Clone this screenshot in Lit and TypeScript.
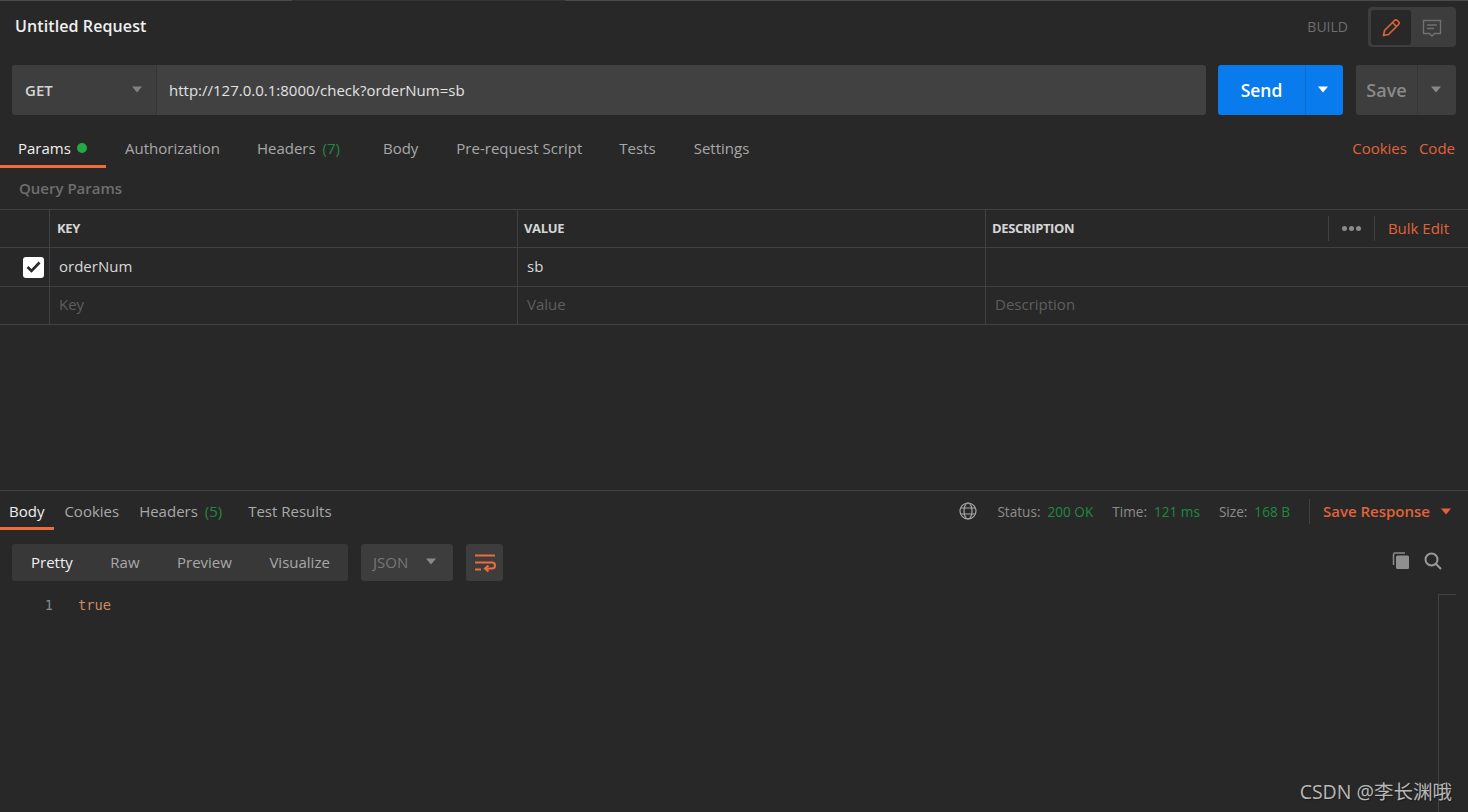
import { LitElement, html, css } from "lit";
import { customElement } from "lit/decorators.js";

const caret = (cls: string) => html`<svg class="${cls}" width="12" height="7" viewBox="0 0 12 7"><path d="M1 0.5h10L6 6.5z" fill="currentColor"/></svg>`;

@customElement("app-root")
export class AppRoot extends LitElement {
  static styles = css`
    :host { display: block; width: 1468px; height: 812px; background: #282828; font-family: "Open Sans", sans-serif; color: #b5b5b5; font-size: 15px; overflow: hidden; position: relative; }
    * { box-sizing: border-box; }
    .page { display: flex; flex-direction: column; height: 812px; }
    .topline { height: 1px; display: grid; grid-template-columns: 292px 273px 1fr; flex: none; }
    .topline i:nth-child(1), .topline i:nth-child(3) { background: #4a4a4a; }
    .topline i:nth-child(2) { background: #333; }
    .head { height: 64px; flex: none; display: flex; align-items: flex-start; padding: 5px 12px 0 15px; }
    .title { font-weight: 600; font-size: 16px; letter-spacing: 0.1px; color: #f0f0f0; margin-top: 9px; line-height: 22px; }
    .build { margin-left: auto; margin-top: 12px; font-size: 14px; font-weight: 400; color: #6f6f6f; line-height: 18px; }
    .switch { margin-left: 20px; width: 88px; height: 40px; background: #3d3d3d; border-radius: 4px; padding: 3px; display: flex; margin-top: 1px; }
    .switch > div { width: 40px; height: 35px; border-radius: 3px; display: flex; align-items: center; justify-content: center; }
    .switch .on { background: #282828; }
    .switch .off { width: 42px; }
    .urlrow { height: 50px; flex: none; padding: 0 12px; display: flex; }
    .method { width: 145px; background: #3e3e3e; border-radius: 3px 0 0 3px; display: flex; align-items: center; justify-content: space-between; padding: 0 13px; font-weight: 600; font-size: 15px; color: #d4d4d4; border-right: 1px solid #353535; padding-bottom: 1px; }
    .method svg { color: #808080; }
    .url { width: 1049px; background: #414141; border-radius: 0 3px 3px 0; display: flex; align-items: center; padding-left: 12px; padding-bottom: 1px; color: #e2e2e2; font-size: 15px; }
    .send { width: 125px; margin-left: 12px; background: #097bed; color: #fff; border-radius: 3px; display: flex; font-weight: 600; font-size: 17.5px; }
    .send span, .save span { display: flex; align-items: center; justify-content: center; padding-bottom: 1px; }
    .send .l { width: 87px; }
    .send .r { width: 34px; border-left: 1px solid #0a6cd0; }
    .save { width: 100px; margin-left: 13px; background: #3e3e3e; color: #8a8a8a; border-radius: 3px; display: flex; font-weight: 600; font-size: 18px; }
    .save .l { width: 61px; }
    .save .r { width: 37px; border-left: 1px solid #363636; color: #888; }
    .tabs { height: 53px; flex: none; display: flex; padding-top: 13px; }
    .tab { height: 40px; display: flex; align-items: flex-start; padding-top: 10px; line-height: 20px; color: #a8a8a8; white-space: pre; }
    .tab.active { color: #f0f0f0; border-bottom: 3px solid #f26b3a; }
    .tab.gap-a { margin-left: 19px; }
    .tab.gap-b { margin-left: 37px; }
    .tab.gap-c { margin-left: 43px; }
    .tab.gap-d { margin-left: 38px; }
    .tab.params { width: 106px; padding-left: 18px; }
    .count { color: #1f8a3f; margin-left: 3px; }
    .dot { width: 10px; height: 10px; border-radius: 50%; background: #26a845; margin: 5px 0 0 6px; }
    .links { margin-left: auto; padding: 10px 13px 0 0; display: flex; gap: 12px; line-height: 20px; color: #e0633a; }
    .qp { height: 41px; flex: none; padding: 10px 0 0 19px; font-weight: 600; font-size: 15px; line-height: 20px; color: #6e6e6e; }
    .row { display: grid; grid-template-columns: 49px 468px 468px 1fr; border-top: 1px solid #414141; flex: none; }
    .row > div { border-left: 1px solid #414141; display: flex; align-items: center; }
    .row > div:first-child { border-left: none; }
    .hdr { height: 38px; font-weight: 700; font-size: 13px; color: #d6d6d6; letter-spacing: -0.35px; }
    .hdr > div { padding-left: 6px; padding-bottom: 2px; }
    .hdr > div:first-child { padding: 0; }
    .hdr > .keycol { padding-left: 7px; }
    .body-row { height: 39px; color: #d8d8d8; }
    .body-row > div { padding-left: 9px; padding-bottom: 2px; }
    .ph { color: #5e5e5e; border-bottom: 1px solid #414141; height: 39px; }
    .ph > div { padding-left: 9px; padding-bottom: 4px; }
    .check { width: 21px; height: 21px; background: #fff; border-radius: 3px; margin-left: 23px; display: flex; align-items: center; justify-content: center; }
    .body-row > div:first-child { padding: 0; }
    .ph > div:first-child { padding: 0; }
    .hdr > .desc-head { justify-content: space-between; padding: 0 19px 0 6px; }
    .desc-head > span:first-child { padding-bottom: 2px; }
    .tools { display: flex; align-items: center; font-weight: 400; font-size: 15px; letter-spacing: 0; color: #e0633a; }
    .vsep { width: 1px; height: 25px; background: #414141; }
    .dots { display: flex; gap: 2px; width: 45px; justify-content: center; }
    .dots i { width: 5px; height: 5px; border-radius: 50%; background: #8a8a8a; }
    .bulk { margin-left: 13px; padding-bottom: 1px; }
    .spacer { flex: 1; }
    .resp { height: 322px; flex: none; border-top: 1px solid #414141; display: flex; flex-direction: column; position: relative; }
    .rtabs { height: 40px; flex: none; display: flex; align-items: flex-start; }
    .rtab { height: 39px; padding: 9.500px 10px 0; line-height: 20px; color: #a8a8a8; white-space: pre; }
    .rtab.active { color: #f0f0f0; padding-left: 9px; padding-right: 10px; border-bottom: 3px solid #f26b3a; }
    .rtab.results { margin-left: 6px; }
    .meta { margin-left: auto; display: flex; align-items: center; height: 40px; font-size: 13.6px; padding-right: 16px; color: #8d8d8d; }
    .meta b { font-weight: 400; color: #1f8a3f; margin-left: 7px; margin-right: 19px; }
    .meta .globe { margin-right: 20px; }
    .meta .sep { width: 1px; height: 25px; background: #414141; margin: 0 13px 0 0; }
    .saver { color: #e0633a; font-weight: 600; font-size: 15px; display: flex; align-items: center; gap: 10px; }
    .controls { height: 37px; margin-top: 13px; flex: none; display: flex; padding: 0 12px; align-items: stretch; }
    .mode { width: 336px; background: #383838; border-radius: 3px; display: flex; align-items: center; padding: 0 0 2px 19px; gap: 37.500px; color: #a8a8a8; }
    .mode .active { color: #f0f0f0; }
    .lang { width: 92px; margin-left: 13px; background: #3d3d3d; border-radius: 3px; display: flex; align-items: center; justify-content: space-between; padding: 0 16px 2px 12px; color: #777; }
    .lang svg { color: #8a8a8a; }
    .wrap { width: 37px; margin-left: 13px; background: #3d3d3d; border-radius: 3px; display: flex; align-items: center; justify-content: center; }
    .rtools { margin-left: auto; display: flex; align-items: center; gap: 12px; padding: 0 13px 3px 0; }
    .code { flex: 1; display: flex; font-family: "DejaVu Sans Mono", monospace; font-size: 13.7px; line-height: 18px; padding-top: 15px; position: relative; }
    .ln { width: 53px; text-align: right; color: #7f8a94; }
    .val { margin-left: 25px; color: #d08b63; }
    .mini { position: absolute; left: 1438px; top: 13px; bottom: 0; width: 18px; border-left: 1px solid #414141; border-top: 1px solid #414141; }
    .wm { position: absolute; right: 16px; top: 779px; font-size: 19.5px; line-height: 26px; color: #b8b8b8; font-family: "Open Sans", "Noto Sans CJK SC", sans-serif; text-shadow: 1px 1px 1px #1c1c1c; }
  `;

  render() {
    return html`<div class="page">
      <div class="topline"><i></i><i></i><i></i></div>
      <div class="head">
        <div class="title">Untitled Request</div>
        <div class="build">BUILD</div>
        <div class="switch">
          <div class="on"><svg width="20" height="20" viewBox="0 0 20 20" fill="none" stroke="#e0633a" stroke-width="1.6" stroke-linejoin="round"><path d="M2.5 17.5l1-5L13.5 2.5c.8-.8 2-.8 2.8 0l1.2 1.2c.8.8.8 2 0 2.8L7.5 16.5z"/><path d="M11.5 4.5l4 4"/></svg></div>
          <div class="off"><svg width="20" height="20" viewBox="0 0 20 20" fill="none" stroke="#707070" stroke-width="1.4"><path d="M1.5 2.5h17v13h-6l-2.500 2.500-2.500-2.500h-6z"/><path d="M5 7h10M5 10.500h7"/></svg></div>
        </div>
      </div>
      <div class="urlrow">
        <div class="method">GET${caret("")}</div>
        <div class="url">http://127.0.0.1:8000/check?orderNum=sb</div>
        <div class="send"><span class="l">Send</span><span class="r">${caret("")}</span></div>
        <div class="save"><span class="l">Save</span><span class="r">${caret("")}</span></div>
      </div>
      <div class="tabs">
        <div class="tab active params">Params<span class="dot"></span></div>
        <div class="tab gap-a">Authorization</div>
        <div class="tab gap-b">Headers <span class="count">(7)</span></div>
        <div class="tab gap-c">Body</div>
        <div class="tab gap-d">Pre-request Script</div>
        <div class="tab gap-b">Tests</div>
        <div class="tab gap-d">Settings</div>
        <div class="links"><span>Cookies</span><span>Code</span></div>
      </div>
      <div class="qp">Query Params</div>
      <div class="row hdr"><div></div><div class="keycol">KEY</div><div>VALUE</div>
        <div class="desc-head"><span>DESCRIPTION</span><span class="tools"><span class="vsep"></span><span class="dots"><i></i><i></i><i></i></span><span class="vsep"></span><span class="bulk">Bulk Edit</span></span></div>
      </div>
      <div class="row body-row"><div><span class="check"><svg width="15" height="12" viewBox="0 0 15 12" fill="none" stroke="#282828" stroke-width="2.600"><path d="M1.500 6l4 4 8-8.500"/></svg></span></div><div>orderNum</div><div>sb</div><div></div></div>
      <div class="row ph"><div></div><div>Key</div><div>Value</div><div>Description</div></div>
      <div class="spacer"></div>
      <div class="resp">
        <div class="rtabs">
          <div class="rtab active">Body</div>
          <div class="rtab">Cookies</div>
          <div class="rtab">Headers <span class="count">(5)</span></div>
          <div class="rtab results">Test Results</div>
          <div class="meta">
            <svg class="globe" width="18" height="18" viewBox="0 0 18 18" fill="none" stroke="#a8a8a8" stroke-width="1.200"><circle cx="9" cy="9" r="8"/><ellipse cx="9" cy="9" rx="4" ry="8"/><path d="M1.800 6h14.400M1.800 12h14.400"/></svg>
            Status:<b>200 OK</b>Time:<b>121 ms</b>Size:<b>168 B</b>
            <span class="sep"></span>
            <span class="saver">Save Response ${caret("")}</span>
          </div>
        </div>
        <div class="controls">
          <div class="mode"><span class="active">Pretty</span><span>Raw</span><span>Preview</span><span>Visualize</span></div>
          <div class="lang">JSON${caret("")}</div>
          <div class="wrap"><svg width="22" height="20" viewBox="0 0 22 20" fill="none" stroke="#f26b3a" stroke-width="2"><path d="M1 2.500h20M1 9.500h17a2.800 2.800 0 0 1 0 6h-6"/><path d="M1 16.500h6"/><path d="M14.500 12.500l-3.500 3 3.500 3"/></svg></div>
          <div class="rtools">
            <svg width="20" height="20" viewBox="0 0 20 20"><path d="M2.500 14V3.500a1.500 1.500 0 0 1 1.500-1.500h10" fill="none" stroke="#8a8a8a" stroke-width="1.500"/><rect x="5" y="4.500" width="13" height="13.500" rx="1.500" fill="#8f8f8f"/></svg>
            <svg width="20" height="20" viewBox="0 0 20 20" fill="none" stroke="#9a9a9a" stroke-width="2"><circle cx="8.500" cy="8.500" r="6"/><path d="M13 13l5 5"/></svg>
          </div>
        </div>
        <div class="code"><span class="ln">1</span><span class="val">true</span><div class="mini"></div></div>
      </div>
    </div>
    <div class="wm">CSDN @李长渊哦</div>`;
  }
}
